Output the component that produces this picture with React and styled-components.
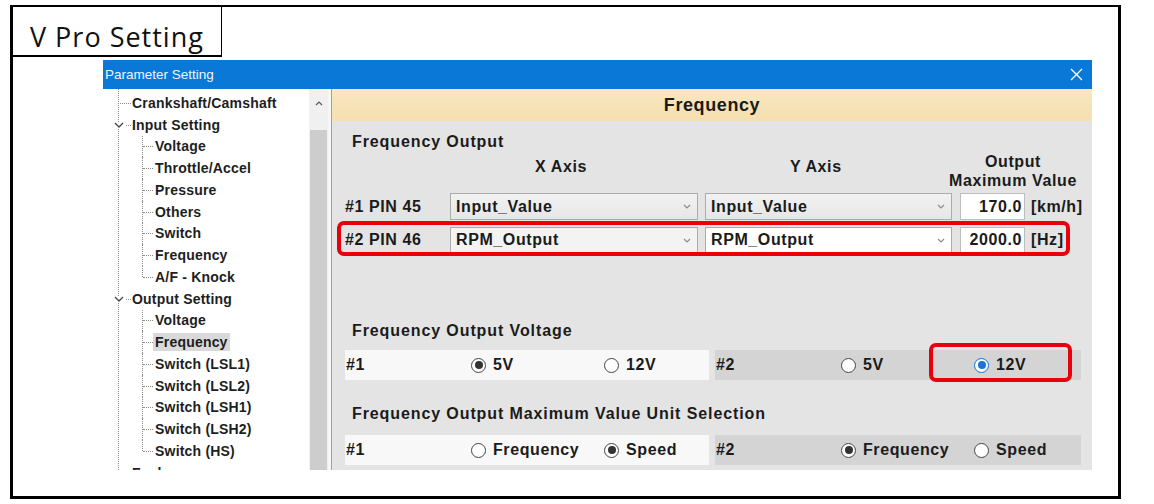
import React from "react";
import styled, { createGlobalStyle, css } from "styled-components";

const GlobalStyle = createGlobalStyle`
  * { box-sizing: border-box; }
  body {
    margin: 0;
    background: #fff;
    font-family: "Liberation Sans", Arial, sans-serif;
    color: #1b1b1b;
  }
`;

const Frame = styled.div`
  margin: 5px 0 0 10px;
  width: 1111px;
  height: 494px;
  border: 3px solid #000;
  border-top-width: 2px;
`;

const TitleBox = styled.div`
  width: 209px;
  height: 50px;
  border-right: 1px solid #000;
  border-bottom: 2px solid #000;
  padding: 12px 0 0 17px;
  font-family: "Open Sans", sans-serif;
  font-size: 27px;
  line-height: 36px;
  letter-spacing: 1px;
  color: #111;
  white-space: nowrap;
`;

const Dialog = styled.div`
  margin: 3px 0 0 90px;
  width: 989px;
  height: 410px;
  display: flex;
  flex-direction: column;
  overflow: hidden;
`;

const TitleBar = styled.div`
  height: 29px;
  background: #0a78d7;
  color: #eef6fd;
  display: flex;
  align-items: center;
  justify-content: space-between;
  padding: 0 9px 0 2px;
  font-size: 13.5px;
`;

const Body = styled.div`
  flex: 1;
  display: flex;
  min-height: 0;
`;

const TreePanel = styled.div`
  width: 206px;
  background: #fff;
  position: relative;
  overflow: hidden;
  padding-top: 3px;
  &::before {
    content: "";
    position: absolute;
    left: 15px;
    top: 0;
    bottom: 0;
    border-left: 1px dotted #8a8a8a;
  }
`;

const TreeRow = styled.div`
  position: relative;
  height: 21.75px;
  display: flex;
  align-items: center;
  padding-left: ${(p) => (p.$level ? 52 : 29)}px;
  font-size: 14px;
  font-weight: bold;
  letter-spacing: 0.2px;
  color: #1e1e1e;
  white-space: nowrap;
  ${(p) =>
    p.$level
      ? css`
          &::before {
            content: "";
            position: absolute;
            left: 39px;
            top: 0;
            height: ${p.$last ? "50%" : "100%"};
            border-left: 1px dotted #8a8a8a;
          }
          &::after {
            content: "";
            position: absolute;
            left: 40px;
            top: 50%;
            width: 10px;
            border-top: 1px dotted #8a8a8a;
          }
        `
      : css`
          &::after {
            content: "";
            position: absolute;
            left: ${p.$open ? 23 : 17}px;
            top: 50%;
            width: ${p.$open ? 5 : 11}px;
            border-top: 1px dotted #8a8a8a;
          }
        `}
`;

const Chevron = styled.svg`
  position: absolute;
  left: 11px;
  top: 8px;
  background: #fff;
`;

const TreeLabel = styled.span`
  padding: 1px 2px;
  margin-left: -2px;
  background: ${(p) => (p.$selected ? "#d9d9d9" : "transparent")};
`;

const Scrollbar = styled.div`
  width: 19px;
  background: #f0f0f0;
  display: flex;
  flex-direction: column;
`;

const ScrollArrow = styled.div`
  height: 28px;
  display: flex;
  align-items: center;
  justify-content: center;
`;

const Thumb = styled.div`
  flex: 1;
  margin: 13px 1px 0;
  background: #cdcdcd;
`;

const Splitter = styled.div`
  width: 4px;
  background: #f6f6f6;
  border-right: 1px solid #a3a3a3;
`;

const Content = styled.div`
  flex: 1;
  background: #e4e4e4;
  overflow: hidden;
  display: flex;
  flex-direction: column;
`;

const Header = styled.div`
  height: 32px;
  flex-shrink: 0;
  background: linear-gradient(#f9e7c0, #f5dfb1);
  display: flex;
  align-items: center;
  justify-content: center;
  font-size: 18px;
  font-weight: bold;
  letter-spacing: 0.6px;
  color: #1a1a1a;
`;

const Panel = styled.div`
  padding: 0 11px 0 13px;
  font-weight: bold;
  font-size: 16px;
  letter-spacing: 0.6px;
`;

const SectionTitle = styled.div`
  margin: ${(p) => p.$top}px 0 0 7px;
  line-height: 20px;
  letter-spacing: 0.9px;
  white-space: nowrap;
`;

const PinGrid = styled.div`
  display: grid;
  grid-template-columns: 105px 255px 255px 68px auto;
  position: relative;
  height: ${(p) => p.$h}px;
  margin-top: ${(p) => p.$top}px;
  ${(p) =>
    p.$highlight &&
    css`
      &::after {
        content: "";
        position: absolute;
        left: -8px;
        right: 11px;
        top: -6px;
        bottom: -3px;
        border: 4px solid #e8000c;
        border-radius: 7px;
      }
    `}
`;

const AxisLabel = styled.div`
  padding: 5px 0 0 85px;
  line-height: 20px;
  white-space: nowrap;
`;

const MaxLabel = styled.div`
  margin-left: -11px;
  width: 128px;
  text-align: center;
  line-height: 19px;
  white-space: nowrap;
`;

const PinLabel = styled.div`
  align-self: center;
  white-space: nowrap;
`;

const Combo = styled.div`
  width: ${(p) => p.$w}px;
  height: 100%;
  border: 1px solid #acacac;
  background: ${(p) => p.$bg};
  display: flex;
  align-items: center;
  justify-content: space-between;
  padding: 0 6px 0 5px;
  white-space: nowrap;
`;

const ValueBox = styled.div`
  width: 65px;
  height: 100%;
  background: #fff;
  border: 1px solid #bdbdbd;
  display: flex;
  align-items: center;
  justify-content: flex-end;
  padding-right: 2px;
`;

const Unit = styled.div`
  align-self: center;
  padding-left: 3px;
  white-space: nowrap;
`;

const RadioRow = styled.div`
  display: flex;
  gap: 6px;
  height: 30px;
  margin-top: ${(p) => p.$top}px;
`;

const RadioSection = styled.div`
  width: ${(p) => (p.$shade ? 366 : 364)}px;
  display: grid;
  grid-template-columns: 125px 133px 1fr;
  align-items: center;
  padding-left: 1px;
  background: ${(p) => (p.$shade ? "#d4d4d4" : "#f8f8f8")};
`;

const RadioCell = styled.div`
  position: relative;
  height: 100%;
  display: flex;
  align-items: center;
  gap: 7px;
  white-space: nowrap;
  ${(p) =>
    p.$highlight &&
    css`
      &::after {
        content: "";
        position: absolute;
        left: -45px;
        width: 135px;
        top: -7px;
        bottom: -2px;
        border: 4px solid #e8000c;
        border-radius: 7px;
      }
    `}
`;

const Circle = styled.span`
  width: 15px;
  height: 15px;
  flex-shrink: 0;
  border-radius: 50%;
  border: 1px solid ${(p) => (p.$blue ? "#0a6fd0" : "#444")};
  background: #fff;
  display: flex;
  align-items: center;
  justify-content: center;
  &::after {
    content: "";
    width: 8px;
    height: 8px;
    border-radius: 50%;
    background: ${(p) => (p.$blue ? "#1b74d6" : "#333")};
    display: ${(p) => (p.$checked ? "block" : "none")};
  }
`;

const Radio = ({ label, checked, blue, highlight }) => (
  <RadioCell $highlight={highlight}>
    <Circle $checked={checked} $blue={blue} />
    {label}
  </RadioCell>
);

const Caret = ({ up }) => (
  <svg width="8" height="5" viewBox="0 0 8 5">
    <polyline
      points={up ? "1,4 4,1 7,4" : "1,1 4,4 7,1"}
      fill="none"
      stroke={up ? "#555" : "#8c8c8c"}
      strokeWidth="1.2"
    />
  </svg>
);

const tree = [
  { t: "Crankshaft/Camshaft" },
  { t: "Input Setting", open: true },
  { t: "Voltage", lv: 1 },
  { t: "Throttle/Accel", lv: 1 },
  { t: "Pressure", lv: 1 },
  { t: "Others", lv: 1 },
  { t: "Switch", lv: 1 },
  { t: "Frequency", lv: 1 },
  { t: "A/F - Knock", lv: 1, last: true },
  { t: "Output Setting", open: true },
  { t: "Voltage", lv: 1 },
  { t: "Frequency", lv: 1, sel: true },
  { t: "Switch (LSL1)", lv: 1 },
  { t: "Switch (LSL2)", lv: 1 },
  { t: "Switch (LSH1)", lv: 1 },
  { t: "Switch (LSH2)", lv: 1 },
  { t: "Switch (HS)", lv: 1, last: true },
  { t: "Fuel" },
];

const App = () => (
  <>
    <GlobalStyle />
    <Frame>
      <TitleBox>V Pro Setting</TitleBox>
      <Dialog>
        <TitleBar>
          <span>Parameter Setting</span>
          <svg width="13" height="13" viewBox="0 0 13 13">
            <path d="M1 1L12 12M12 1L1 12" stroke="#fff" strokeWidth="1.3" />
          </svg>
        </TitleBar>
        <Body>
          <TreePanel>
            {tree.map((n, i) => (
              <TreeRow key={i} $level={n.lv} $last={n.last} $open={n.open}>
                {n.open && (
                  <Chevron width="10" height="6" viewBox="0 0 10 6">
                    <polyline points="1,1 5,5 9,1" fill="none" stroke="#444" strokeWidth="1.3" />
                  </Chevron>
                )}
                <TreeLabel $selected={n.sel}>{n.t}</TreeLabel>
              </TreeRow>
            ))}
          </TreePanel>
          <Scrollbar>
            <ScrollArrow>
              <Caret up />
            </ScrollArrow>
            <Thumb />
          </Scrollbar>
          <Splitter />
          <Content>
            <Header>Frequency</Header>
            <Panel>
              <SectionTitle $top={11}>Frequency Output</SectionTitle>
              <PinGrid $h={38} $top={0}>
                <div />
                <AxisLabel>X Axis</AxisLabel>
                <AxisLabel>Y Axis</AxisLabel>
                <MaxLabel>
                  Output
                  <br />
                  Maximum Value
                </MaxLabel>
              </PinGrid>
              <PinGrid $h={27} $top={3}>
                <PinLabel>#1 PIN 45</PinLabel>
                <Combo $w={248} $bg="linear-gradient(#f2f2f2, #e6e6e6)">
                  Input_Value <Caret />
                </Combo>
                <Combo $w={247} $bg="linear-gradient(#f2f2f2, #e6e6e6)">
                  Input_Value <Caret />
                </Combo>
                <ValueBox>170.0</ValueBox>
                <Unit>[km/h]</Unit>
              </PinGrid>
              <PinGrid $h={26} $top={7} $highlight>
                <PinLabel>#2 PIN 46</PinLabel>
                <Combo $w={248} $bg="#f3f3f3">
                  RPM_Output <Caret />
                </Combo>
                <Combo $w={247} $bg="#fff">
                  RPM_Output <Caret />
                </Combo>
                <ValueBox>2000.0</ValueBox>
                <Unit>[Hz]</Unit>
              </PinGrid>

              <SectionTitle $top={68}>Frequency Output Voltage</SectionTitle>
              <RadioRow $top={9}>
                <RadioSection>
                  <span>#1</span>
                  <Radio label="5V" checked />
                  <Radio label="12V" />
                </RadioSection>
                <RadioSection $shade>
                  <span>#2</span>
                  <Radio label="5V" />
                  <Radio label="12V" checked blue highlight />
                </RadioSection>
              </RadioRow>

              <SectionTitle $top={24}>Frequency Output Maximum Value Unit Selection</SectionTitle>
              <RadioRow $top={11}>
                <RadioSection>
                  <span>#1</span>
                  <Radio label="Frequency" />
                  <Radio label="Speed" checked />
                </RadioSection>
                <RadioSection $shade>
                  <span>#2</span>
                  <Radio label="Frequency" checked />
                  <Radio label="Speed" />
                </RadioSection>
              </RadioRow>
            </Panel>
          </Content>
        </Body>
      </Dialog>
    </Frame>
  </>
);

export default App;
